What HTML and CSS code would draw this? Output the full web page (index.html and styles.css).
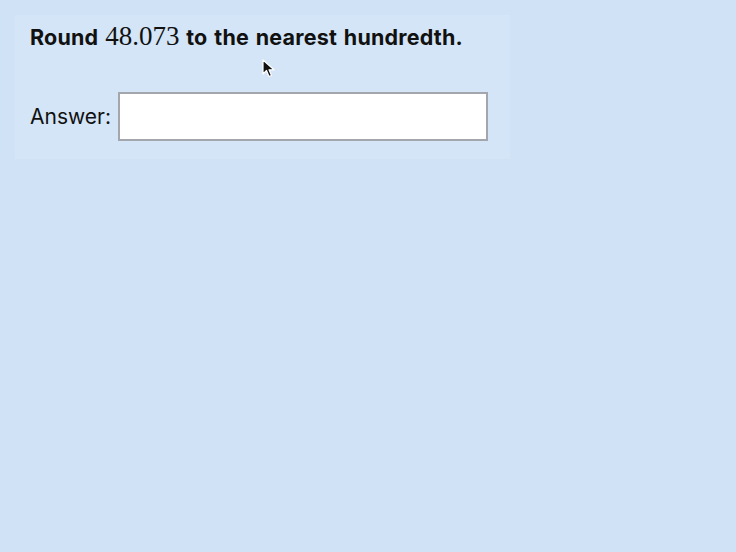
FILE: index.html
```html
<!DOCTYPE html>
<html>
<head>
<meta charset="utf-8">
<link rel="stylesheet" href="styles.css">
</head>
<body>
<div class="panel">
  <p class="question">Round <span class="math">48.073</span> to the nearest hundredth.</p>
  <div class="answer-row">
    <label class="answer-label" for="ans">Answer:</label>
    <input id="ans" class="answer-input" type="text">
  </div>
</div>
<svg class="cursor" width="14" height="20" viewBox="0 0 14 20">
  <path d="M1 1 L1 15 L4.5 11.5 L7 17.5 L9.5 16.5 L7 10.8 L12 10.8 Z" fill="#111" stroke="#fff" stroke-width="1.2" stroke-linejoin="round"/>
</svg>
</body>
</html>
```
FILE: styles.css
```css
html, body {
  margin: 0;
  padding: 0;
  background: #cfe2f6;
  height: 100%;
}
body {
  font-family: Inter, "Noto Sans", sans-serif;
  color: #111;
  position: relative;
}
.panel {
  margin: 15px 0 0 15px;
  width: 495px;
  padding: 13px 15px 18px;
  box-sizing: border-box;
  background: #d3e5f6;
}
.question {
  margin: 0;
  font-size: 21.5px;
  font-weight: 700;
  line-height: 16px;
  padding-top: 0;
  letter-spacing: 0.2px;
  word-spacing: 1.5px;
}
.math {
  font-family: "Liberation Serif", "DejaVu Serif", serif;
  font-weight: 400;
  font-size: 27px;
  letter-spacing: 0;
}
.answer-row {
  display: flex;
  align-items: center;
  margin-top: 47px;
  gap: 7px;
}
.answer-label {
  font-size: 21px;
  font-weight: 400;
}
.answer-input {
  width: 370px;
  height: 49px;
  box-sizing: border-box;
  border: 2px solid #a3a7ad;
  background: #fff;
  margin: 0;
  padding: 0 6px;
  font-size: 18px;
}
.cursor {
  position: absolute;
  left: 262px;
  top: 59px;
}
```
